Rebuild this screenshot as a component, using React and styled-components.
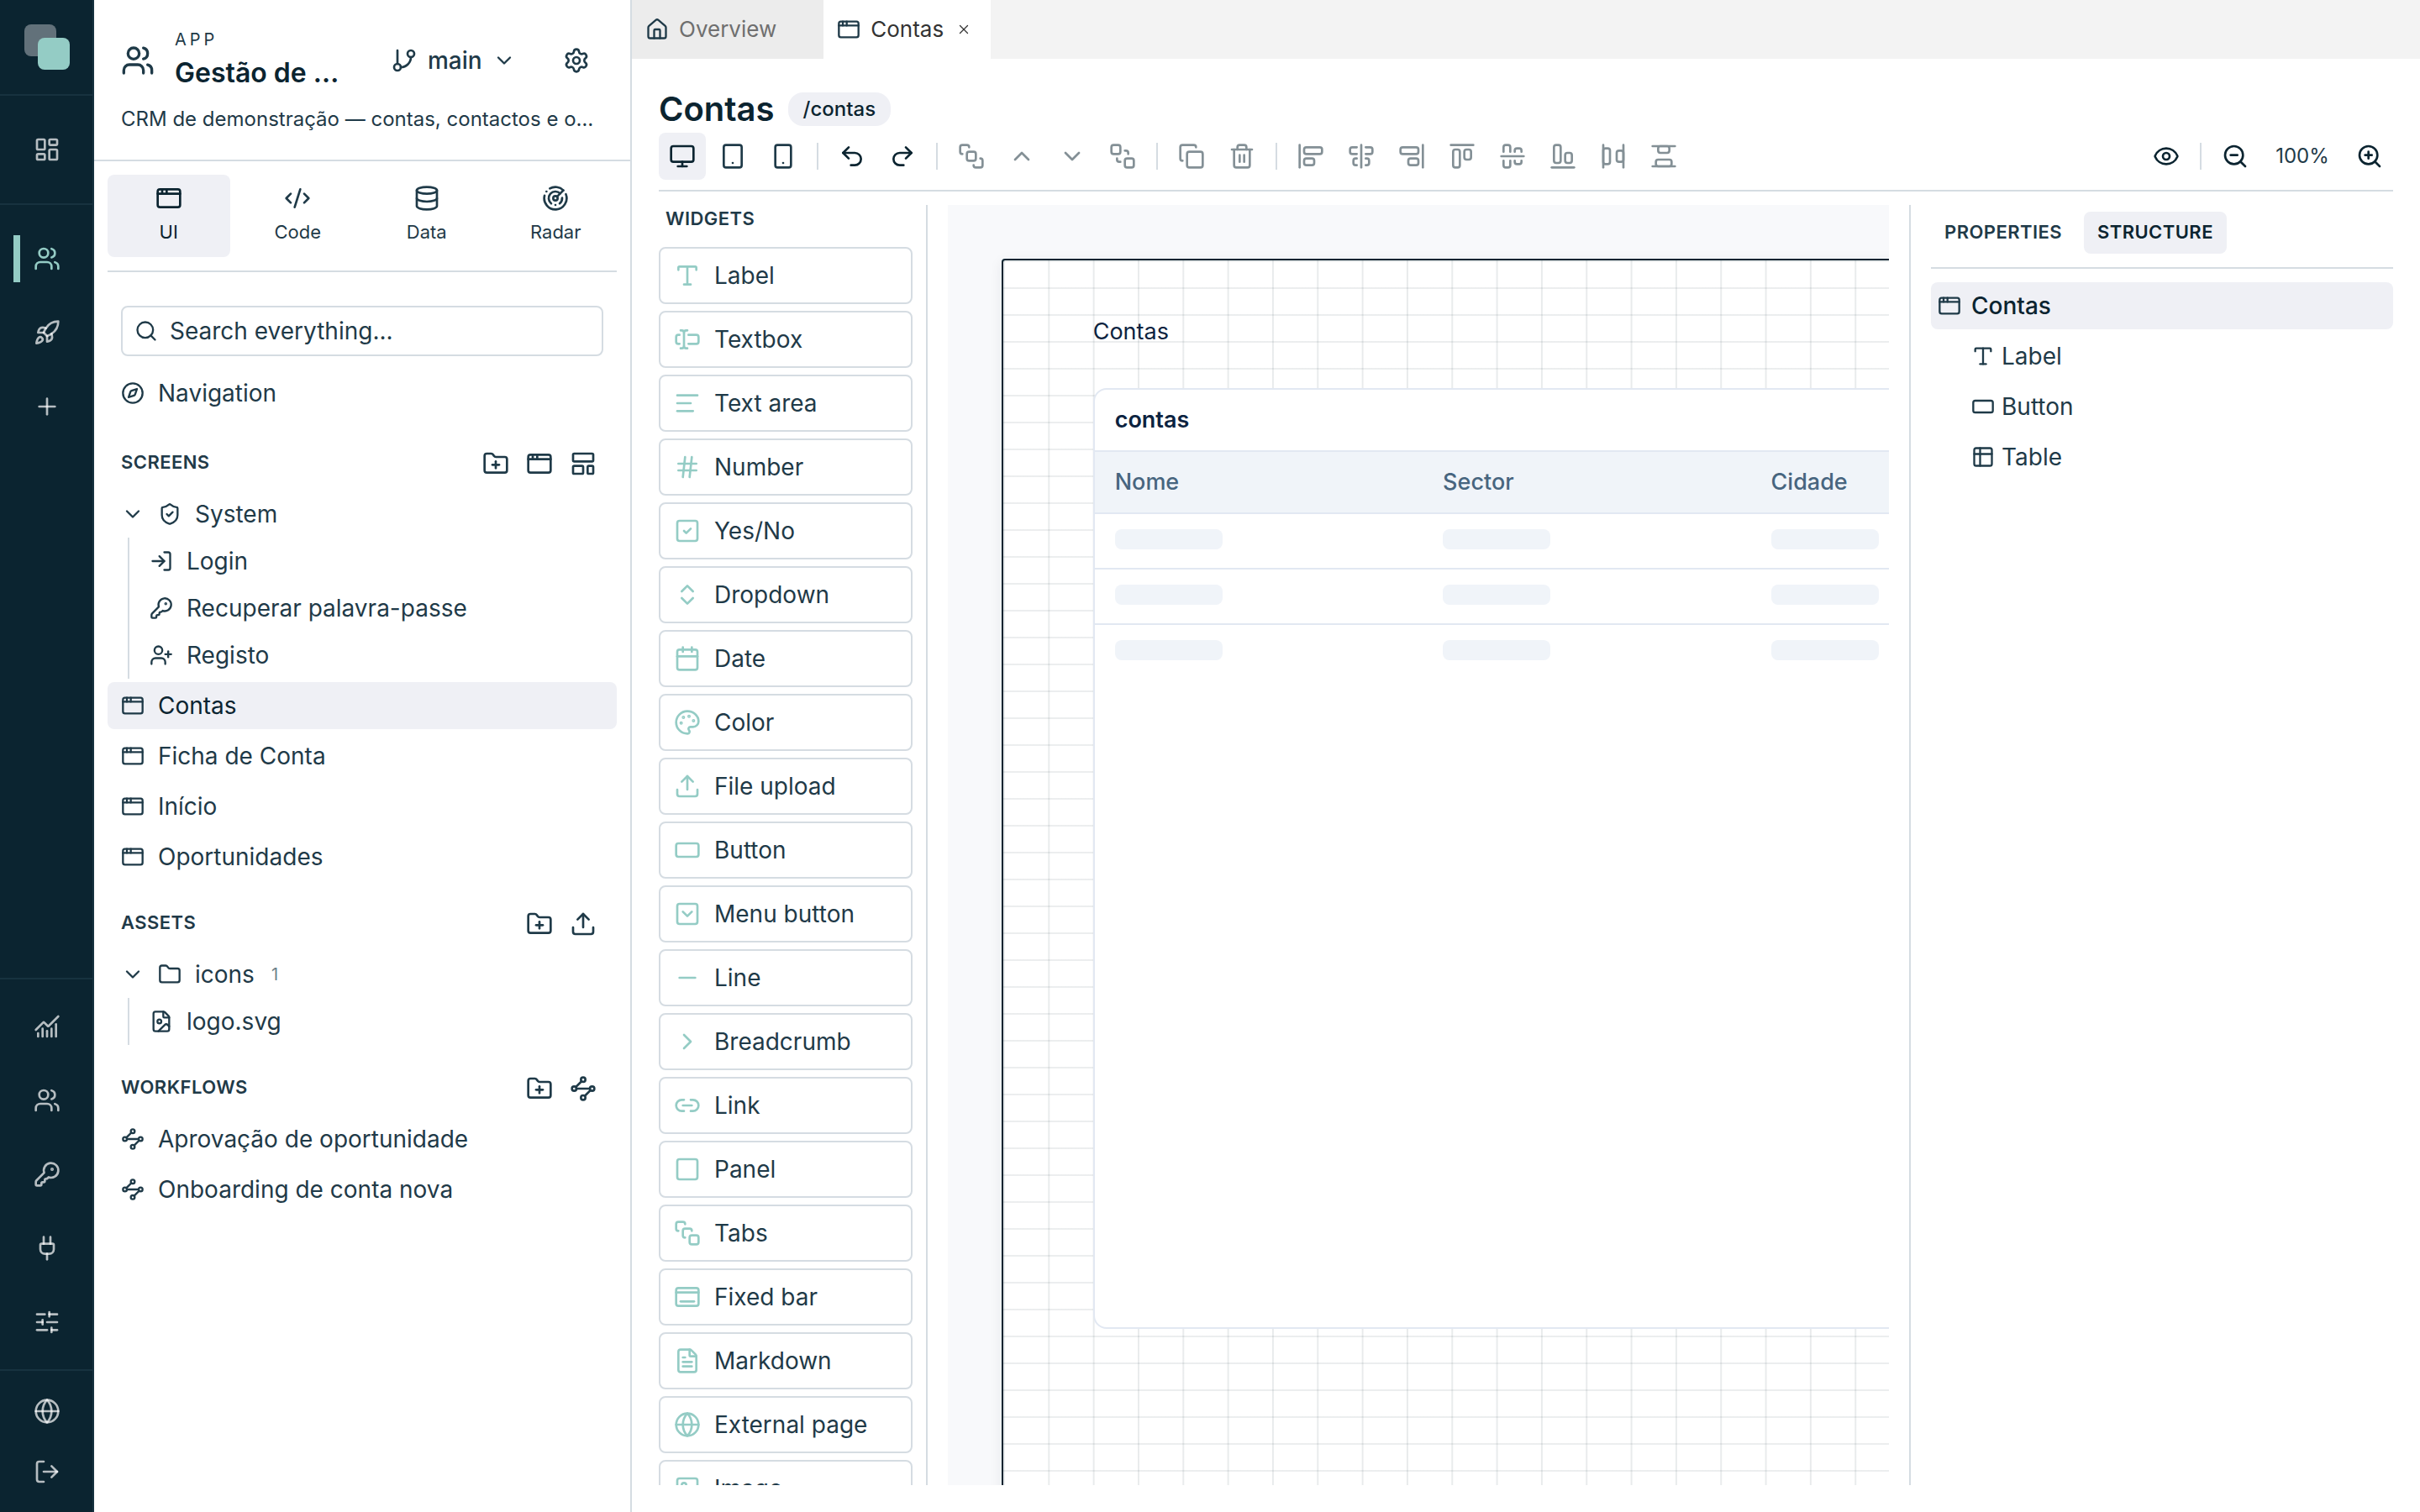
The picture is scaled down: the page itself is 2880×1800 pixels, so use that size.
import React, { useState } from 'react';
import styled, { createGlobalStyle, css } from 'styled-components';
import {
    AlignCenterHorizontal, AlignCenterVertical, AlignEndHorizontal, AlignEndVertical,
    AlignHorizontalSpaceBetween, AlignStartHorizontal, AlignStartVertical,
    AlignVerticalSpaceBetween, AppWindow, BringToFront, Calendar, ChartNoAxesCombined,
    ChevronDown, ChevronRight, ChevronUp, ChevronsUpDown, CodeXml, Compass, Copy, Database,
    Dock, Eye, FileImage, FileText, Folder, FolderPlus, GitBranch, Globe, Hash, House, Image,
    KeyRound, LayoutDashboard, LayoutTemplate, Link2, LogIn, LogOut, Minus, Monitor, Palette,
    Plug, Plus, Radar, RectangleHorizontal, Redo2, Rocket, Search, SendToBack, Settings,
    ShieldCheck, SlidersHorizontal, Smartphone, Square, SquareCheck, SquareChevronDown,
    SquareStack, Tablet, TextAlignStart, TextCursorInput, Trash2, Type, Undo2, Upload,
    UserPlus, Users, X, ZoomIn, ZoomOut,
} from 'lucide-react';

// ============================================
// THEME
// ============================================

const colors = {
    ink: '#0b2430',
    text: '#1f3a48',
    muted: '#6d7f89',
    line: '#d5dce2',
    soft: '#eff0f5',
    mint: '#94ccc5',
    railLine: '#17323f',
    railIcon: 'rgba(255, 255, 255, 0.7)',
    canvas: '#f8f9fb',
    sheetText: '#0c2340',
    sheetLine: '#e2e8f2',
    sheetSoft: '#f0f4f9',
    sheetHead: '#47657f',
};

const GlobalStyle = createGlobalStyle`
  *, *::before, *::after {
    box-sizing: border-box;
  }

  body {
    margin: 0;
    font-family: Inter, 'Noto Sans', sans-serif;
    font-size: 28px;
    line-height: 40px;
    color: ${colors.text};
    background: #fff;
  }

  button, input {
    font: inherit;
    color: inherit;
  }

  button {
    margin: 0;
    padding: 0;
    border: 0;
    background: none;
    cursor: pointer;
  }

  a {
    color: inherit;
    text-decoration: none;
  }

  svg {
    display: block;
    flex: none;
  }
`;

// ============================================
// SHELL
// ============================================

const Shell = styled.div`
  display: flex;
  height: 100vh;
  overflow: hidden;
`;

const Rail = styled.nav`
  display: flex;
  flex-direction: column;
  flex: none;
  width: 112px;
  background: ${colors.ink};
  border-right: 2px solid ${colors.railLine};
`;

const RailLogo = styled.a`
  display: flex;
  align-items: center;
  justify-content: center;
  height: 114px;
  padding-left: 2px;
  border-bottom: 2px solid ${colors.railLine};
`;

const RailGroup = styled.div`
  display: flex;
  flex-direction: column;
  gap: ${(p) => p.$gap}px;
  padding: ${(p) => p.$pad}px 14px ${(p) => p.$pad}px 16px;
  ${(p) => p.$line === 'bottom' && css`border-bottom: 2px solid ${colors.railLine};`}
  ${(p) => p.$line === 'top' && css`border-top: 2px solid ${colors.railLine};`}
  ${(p) => p.$grow && css`flex: 1;`}
`;

const RailLink = styled.a`
  display: flex;
  align-items: center;
  justify-content: center;
  height: 56px;
  color: ${(p) => (p.$active ? colors.mint : colors.railIcon)};
  ${(p) => p.$active && css`
    padding-right: 8px;
    border-left: 8px solid ${colors.mint};
  `}
`;

// ============================================
// SIDEBAR
// ============================================

const Sidebar = styled.aside`
  flex: none;
  width: 640px;
  border-right: 2px solid ${colors.line};
`;

const AppHeader = styled.header`
  height: 192px;
  padding: 32px 32px 0;
  border-bottom: 2px solid ${colors.line};
`;

const AppHeaderRow = styled.div`
  display: flex;
  align-items: center;
  height: 80px;
`;

const AppName = styled.div`
  width: 226px;
  margin-left: 24px;
`;

const Eyebrow = styled.div`
  font-size: 20px;
  line-height: 30px;
  letter-spacing: 4px;
`;

const AppTitle = styled.h2`
  margin: 0;
  font-size: 32px;
  line-height: 50px;
  font-weight: 600;
  color: ${colors.ink};
`;

const BranchButton = styled.button`
  display: flex;
  align-items: center;
  gap: 12px;
  margin-left: 31px;
  font-weight: 500;
`;

const GearButton = styled.button`
  margin-left: auto;
  padding: 16px;
`;

const AppDescription = styled.p`
  margin: 12px 0 0;
  font-size: 24px;
  line-height: 36px;
  white-space: nowrap;
`;

const SidebarBody = styled.div`
  padding: 16px;
`;

const ModeTabs = styled.div`
  display: grid;
  grid-template-columns: repeat(4, 1fr);
  gap: 8px;
  padding-bottom: 16px;
  border-bottom: 2px solid ${colors.line};
`;

const ModeTab = styled.button`
  display: flex;
  flex-direction: column;
  align-items: center;
  gap: 8px;
  height: 98px;
  padding-top: 12px;
  border-radius: 8px;
  font-size: 22px;
  line-height: 32px;
  color: ${(p) => (p.$active ? colors.ink : colors.text)};
  background: ${(p) => (p.$active ? colors.soft : 'transparent')};
`;

const SearchBox = styled.label`
  display: flex;
  align-items: center;
  gap: 14px;
  height: 60px;
  margin: 40px 16px 16px;
  padding: 0 14px;
  border: 2px solid ${colors.line};
  border-radius: 8px;

  input {
    flex: 1;
    min-width: 0;
    padding: 0;
    border: 0;
    outline: 0;
    background: none;
  }

  input::placeholder {
    color: ${colors.text};
    opacity: 1;
  }
`;

const SectionHeader = styled.div`
  display: flex;
  align-items: center;
  height: 48px;
  margin: 28px 0 8px;
  padding: 0 16px;
`;

const SectionTitle = styled.h3`
  flex: 1;
  margin: 0;
  padding-bottom: 4px;
  font-size: 22px;
  line-height: 32px;
  font-weight: 600;
  letter-spacing: 0.02em;
`;

const SectionAction = styled.button`
  display: flex;
  align-items: center;
  justify-content: center;
  width: 48px;
  height: 48px;
  margin-left: 4px;
`;

const TreeList = styled.div`
  display: flex;
  flex-direction: column;
  gap: 4px;
`;

const NavigationList = styled(TreeList)`
  padding-bottom: 4px;
`;

const TreeBranch = styled.div`
  margin-left: 24px;
  border-left: 2px solid ${colors.line};
`;

const TreeRow = styled.a`
  display: flex;
  align-items: center;
  gap: 16px;
  height: 56px;
  padding: 0 ${(p) => (p.$child ? 24 : 16)}px;
  border-radius: 8px;
  color: ${(p) => (p.$active ? colors.ink : colors.text)};
  background: ${(p) => (p.$active ? colors.soft : 'transparent')};

  svg {
    color: ${colors.text};
  }
`;

const Count = styled.span`
  margin-left: 4px;
  font-size: 20px;
  color: ${colors.muted};
`;

// ============================================
// MAIN AREA
// ============================================

const Main = styled.main`
  display: flex;
  flex-direction: column;
  flex: 1;
  min-width: 0;
`;

const TabStrip = styled.div`
  display: flex;
  height: 70px;
  background: #f3f3f3;
`;

const DocTab = styled.div`
  display: flex;
  align-items: center;
  gap: 8px;
  padding: 0 16px;
  font-size: 26px;
  color: ${(p) => (p.$active ? '#333' : '#6f6f6f')};
  background: ${(p) => (p.$active ? '#fff' : '#ececec')};
`;

const DocTabLabel = styled.button`
  display: flex;
  align-items: center;
  gap: 12px;

  svg {
    color: ${colors.text};
  }
`;

const DocTabClose = styled.button`
  display: flex;
  align-items: center;
  justify-content: center;
  width: 32px;
  height: 32px;
  visibility: ${(p) => (p.$active ? 'visible' : 'hidden')};
`;

const Editor = styled.div`
  display: flex;
  flex-direction: column;
  flex: 1;
  min-height: 0;
  padding: 32px;
`;

const TitleRow = styled.div`
  display: flex;
  align-items: center;
  gap: 16px;
  height: 56px;
`;

const PageTitle = styled.h1`
  margin: 0;
  font-size: 40px;
  line-height: 56px;
  font-weight: 600;
  color: ${colors.ink};
`;

const RoutePill = styled.span`
  padding: 0 18px;
  border-radius: 18px;
  font-size: 24px;
  font-weight: 500;
  color: ${colors.ink};
  background: ${colors.soft};
`;

const Toolbar = styled.div`
  display: flex;
  align-items: center;
  gap: 4px;
  padding-bottom: 12px;
  border-bottom: 2px solid ${colors.line};
`;

const ToolButton = styled.button`
  display: flex;
  align-items: center;
  justify-content: center;
  width: 56px;
  height: 56px;
  border-radius: 8px;
  color: ${(p) => (p.$quiet ? colors.text : colors.ink)};
  background: ${(p) => (p.$active ? colors.soft : 'transparent')};

  &:disabled {
    opacity: 0.5;
    cursor: default;
  }
`;

const ToolDivider = styled.span`
  width: 2px;
  height: 32px;
  margin: 0 8px;
  background: ${colors.line};
`;

const Spacer = styled.span`
  flex: 1;
`;

const ZoomLevel = styled.span`
  width: 96px;
  font-size: 24px;
  text-align: center;
`;

const Workspace = styled.div`
  display: flex;
  gap: 24px;
  flex: 1;
  min-height: 0;
  padding-top: 16px;
`;

// ============================================
// WIDGET PALETTE
// ============================================

const WidgetPanel = styled.section`
  flex: none;
  width: 320px;
  padding-right: 16px;
  border-right: 2px solid ${colors.line};
  overflow: hidden;
`;

const WidgetHeading = styled.h3`
  margin: 0 8px 18px;
  font-size: 22px;
  line-height: 32px;
  font-weight: 600;
  letter-spacing: 0.02em;
`;

const WidgetButton = styled.button`
  display: flex;
  align-items: center;
  gap: 16px;
  width: 100%;
  height: 68px;
  margin-bottom: 8px;
  padding: 0 16px;
  border: 2px solid ${colors.line};
  border-radius: 8px;
  text-align: left;

  svg {
    color: ${colors.mint};
  }
`;

// ============================================
// CANVAS
// ============================================

const CanvasScroll = styled.section`
  flex: 1;
  min-width: 0;
  padding: 64px 0 0 64px;
  background: ${colors.canvas};
  overflow: hidden;
`;

const Sheet = styled.div`
  display: grid;
  grid-template-columns: repeat(24, 1fr);
  grid-template-rows: 88px 1120px;
  width: 1284px;
  min-height: 1600px;
  padding-top: 64px;
  border: 2px solid ${colors.ink};
  border-radius: 4px;
  box-shadow: 0 4px 16px rgba(11, 36, 48, 0.08);
  background-color: #fff;
  background-image:
    linear-gradient(to right, rgba(11, 36, 48, 0.09) 2px, transparent 2px),
    linear-gradient(to bottom, rgba(11, 36, 48, 0.08) 2px, transparent 2px);
  background-size: calc(100% / 24) 32px;
  font-size: 27px;
  color: ${colors.sheetText};
`;

const SheetLabel = styled.div`
  grid-column: 3 / -1;
  line-height: 42px;
`;

const SheetCard = styled.div`
  grid-column: 3 / -1;
  margin-right: -2px;
  border: 2px solid ${colors.sheetLine};
  border-radius: 16px;
  background: #fff;
  overflow: hidden;
`;

const CardTitle = styled.div`
  padding: 16px 24px;
  font-weight: 600;
`;

const DataTable = styled.table`
  width: 100%;
  table-layout: fixed;
  border-collapse: separate;
  border-spacing: 0;

  th {
    padding: 16px 24px;
    border-top: 2px solid ${colors.sheetLine};
    border-bottom: 2px solid ${colors.sheetLine};
    font-weight: 500;
    text-align: left;
    color: ${colors.sheetHead};
    background: ${colors.sheetSoft};
  }

  td {
    padding: 18px 24px 22px;
    border-bottom: 2px solid ${colors.sheetLine};
  }

  tbody tr:last-child td {
    border-bottom: 0;
  }
`;

const Skeleton = styled.div`
  width: 128px;
  height: 24px;
  border-radius: 8px;
  background: ${colors.sheetSoft};
`;

// ============================================
// INSPECTOR
// ============================================

const Inspector = styled.aside`
  flex: none;
  width: 576px;
  padding-left: 24px;
  border-left: 2px solid ${colors.line};
`;

const InspectorTabs = styled.div`
  display: flex;
  gap: 10px;
  padding: 8px 0 16px;
  border-bottom: 2px solid ${colors.line};
`;

const InspectorTab = styled.button`
  height: 50px;
  padding: 0 16px 2px;
  border-radius: 8px;
  font-size: 22px;
  font-weight: 600;
  letter-spacing: 0.02em;
  color: ${(p) => (p.$active ? colors.ink : colors.text)};
  background: ${(p) => (p.$active ? colors.soft : 'transparent')};
`;

const NodeList = styled.div`
  display: flex;
  flex-direction: column;
  gap: 4px;
  padding-top: 16px;
`;

const NodeRow = styled.button`
  display: flex;
  align-items: center;
  gap: ${(p) => (p.$root ? 12 : 8)}px;
  height: 56px;
  padding-left: ${(p) => (p.$root ? 8 : 48)}px;
  border-radius: 8px;
  font-weight: ${(p) => (p.$root ? 500 : 400)};
  color: ${(p) => (p.$root ? colors.ink : colors.text)};
  background: ${(p) => (p.$root ? colors.soft : 'transparent')};

  svg {
    color: ${colors.text};
  }
`;

// ============================================
// ICONS
// ============================================

function LineIcon({ size, children }) {
    return (
        <svg
            width={size}
            height={size}
            viewBox="0 0 24 24"
            fill="none"
            stroke="currentColor"
            strokeWidth="2"
            strokeLinecap="round"
            strokeLinejoin="round"
        >
            {children}
        </svg>
    );
}

function TableIcon({ size }) {
    return (
        <LineIcon size={size}>
            <rect x="3" y="3" width="18" height="18" rx="2" />
            <path d="M3 9h18" />
            <path d="M9 3v18" />
        </LineIcon>
    );
}

function WorkflowIcon({ size }) {
    return (
        <LineIcon size={size}>
            <path d="m10.586 5.414-5.172 5.172" />
            <path d="m18.586 13.414-5.172 5.172" />
            <path d="M6 12h12" />
            <circle cx="12" cy="20" r="2" />
            <circle cx="12" cy="4" r="2" />
            <circle cx="20" cy="12" r="2" />
            <circle cx="4" cy="12" r="2" />
        </LineIcon>
    );
}

// ============================================
// DATA
// ============================================

const modes = [
    { label: 'UI', icon: AppWindow },
    { label: 'Code', icon: CodeXml },
    { label: 'Data', icon: Database },
    { label: 'Radar', icon: Radar },
];

const systemScreens = [
    { label: 'Login', icon: LogIn },
    { label: 'Recuperar palavra-passe', icon: KeyRound },
    { label: 'Registo', icon: UserPlus },
];

const screens = ['Contas', 'Ficha de Conta', 'Início', 'Oportunidades'];

const workflows = ['Aprovação de oportunidade', 'Onboarding de conta nova'];

const devices = [
    { label: 'Desktop', icon: Monitor },
    { label: 'Tablet', icon: Tablet },
    { label: 'Phone', icon: Smartphone },
];

const orderTools = [
    { label: 'Bring to front', icon: BringToFront },
    { label: 'Move up', icon: ChevronUp },
    { label: 'Move down', icon: ChevronDown },
    { label: 'Send to back', icon: SendToBack },
];

const editTools = [
    { label: 'Duplicate', icon: Copy },
    { label: 'Delete', icon: Trash2 },
];

const alignTools = [
    { label: 'Align left', icon: AlignStartVertical },
    { label: 'Align center', icon: AlignCenterVertical },
    { label: 'Align right', icon: AlignEndVertical },
    { label: 'Align top', icon: AlignStartHorizontal },
    { label: 'Align middle', icon: AlignCenterHorizontal },
    { label: 'Align bottom', icon: AlignEndHorizontal },
    { label: 'Distribute horizontally', icon: AlignHorizontalSpaceBetween },
    { label: 'Distribute vertically', icon: AlignVerticalSpaceBetween },
];

const widgets = [
    { label: 'Label', icon: Type },
    { label: 'Textbox', icon: TextCursorInput },
    { label: 'Text area', icon: TextAlignStart },
    { label: 'Number', icon: Hash },
    { label: 'Yes/No', icon: SquareCheck },
    { label: 'Dropdown', icon: ChevronsUpDown },
    { label: 'Date', icon: Calendar },
    { label: 'Color', icon: Palette },
    { label: 'File upload', icon: Upload },
    { label: 'Button', icon: RectangleHorizontal },
    { label: 'Menu button', icon: SquareChevronDown },
    { label: 'Line', icon: Minus },
    { label: 'Breadcrumb', icon: ChevronRight },
    { label: 'Link', icon: Link2 },
    { label: 'Panel', icon: Square },
    { label: 'Tabs', icon: SquareStack },
    { label: 'Fixed bar', icon: Dock },
    { label: 'Markdown', icon: FileText },
    { label: 'External page', icon: Globe },
    { label: 'Image', icon: Image },
];

const nodes = [
    { label: 'Label', icon: Type },
    { label: 'Button', icon: RectangleHorizontal },
    { label: 'Table', icon: TableIcon },
];

const columns = ['Nome', 'Sector', 'Cidade'];

// ============================================
// COMPONENTS
// ============================================

function NavRail() {
    const link = (label, Icon, active) => (
        <RailLink key={label} href="#" aria-label={label} $active={active}>
            <Icon size={32} />
        </RailLink>
    );

    return (
        <Rail>
            <RailLogo href="#" aria-label="Home">
                <svg width="54" height="54" viewBox="0 0 54 54">
                    <rect width="38" height="38" rx="8" fill="#62717a" />
                    <rect x="16" y="16" width="38" height="38" rx="8" fill={colors.mint} />
                </svg>
            </RailLogo>
            <RailGroup $pad={36} $line="bottom">
                {link('Dashboard', LayoutDashboard)}
            </RailGroup>
            <RailGroup $pad={36} $gap={32} $grow>
                {link('CRM', Users, true)}
                {link('Launch', Rocket)}
                {link('New app', Plus)}
            </RailGroup>
            <RailGroup $pad={28} $gap={32} $line="top">
                {link('Analytics', ChartNoAxesCombined)}
                {link('Users', Users)}
                {link('Keys', KeyRound)}
                {link('Integrations', Plug)}
                {link('Preferences', SlidersHorizontal)}
            </RailGroup>
            <RailGroup $pad={20} $gap={16} $line="top">
                {link('Language', Globe)}
                {link('Sign out', LogOut)}
            </RailGroup>
        </Rail>
    );
}

function Section({ title, actions, children }) {
    return (
        <section>
            <SectionHeader>
                <SectionTitle>{title}</SectionTitle>
                {actions.map(({ label, icon: Icon }) => (
                    <SectionAction key={label} aria-label={label}>
                        <Icon size={32} />
                    </SectionAction>
                ))}
            </SectionHeader>
            <TreeList>{children}</TreeList>
        </section>
    );
}

function TreeItem({ label, icon: Icon, active, child }) {
    return (
        <TreeRow href="#" $active={active} $child={child}>
            <Icon size={28} />
            {label}
        </TreeRow>
    );
}

function AppSidebar() {
    const [mode, setMode] = useState('UI');
    const [query, setQuery] = useState('');

    return (
        <Sidebar>
            <AppHeader>
                <AppHeaderRow>
                    <Users size={40} />
                    <AppName>
                        <Eyebrow>APP</Eyebrow>
                        <AppTitle>Gestão de …</AppTitle>
                    </AppName>
                    <BranchButton>
                        <GitBranch size={32} />
                        main
                        <ChevronDown size={28} />
                    </BranchButton>
                    <GearButton aria-label="Settings">
                        <Settings size={32} />
                    </GearButton>
                </AppHeaderRow>
                <AppDescription>CRM de demonstração — contas, contactos e o…</AppDescription>
            </AppHeader>

            <SidebarBody>
                <ModeTabs>
                    {modes.map(({ label, icon: Icon }) => (
                        <ModeTab key={label} $active={mode === label} onClick={() => setMode(label)}>
                            <Icon size={32} />
                            {label}
                        </ModeTab>
                    ))}
                </ModeTabs>

                <SearchBox>
                    <Search size={28} />
                    <input
                        type="text"
                        aria-label="Search everything"
                        placeholder="Search everything..."
                        value={query}
                        onChange={(e) => setQuery(e.target.value)}
                    />
                </SearchBox>

                <NavigationList>
                    <TreeItem label="Navigation" icon={Compass} />
                </NavigationList>

                <Section
                    title="SCREENS"
                    actions={[
                        { label: 'New screen folder', icon: FolderPlus },
                        { label: 'New screen', icon: AppWindow },
                        { label: 'New from template', icon: LayoutTemplate },
                    ]}
                >
                    <div>
                        <TreeRow href="#">
                            <ChevronDown size={28} />
                            <ShieldCheck size={28} />
                            System
                        </TreeRow>
                        <TreeBranch>
                            {systemScreens.map((screen) => (
                                <TreeItem key={screen.label} {...screen} child />
                            ))}
                        </TreeBranch>
                    </div>
                    {screens.map((label) => (
                        <TreeItem key={label} label={label} icon={AppWindow} active={label === 'Contas'} />
                    ))}
                </Section>

                <Section
                    title="ASSETS"
                    actions={[
                        { label: 'New asset folder', icon: FolderPlus },
                        { label: 'Upload asset', icon: Upload },
                    ]}
                >
                    <div>
                        <TreeRow href="#">
                            <ChevronDown size={28} />
                            <Folder size={28} />
                            icons
                            <Count>1</Count>
                        </TreeRow>
                        <TreeBranch>
                            <TreeItem label="logo.svg" icon={FileImage} child />
                        </TreeBranch>
                    </div>
                </Section>

                <Section
                    title="WORKFLOWS"
                    actions={[
                        { label: 'New workflow folder', icon: FolderPlus },
                        { label: 'New workflow', icon: WorkflowIcon },
                    ]}
                >
                    {workflows.map((label) => (
                        <TreeItem key={label} label={label} icon={WorkflowIcon} />
                    ))}
                </Section>
            </SidebarBody>
        </Sidebar>
    );
}

function ToolGroup({ tools, active, disabled, onPick }) {
    return tools.map(({ label, icon: Icon }) => (
        <ToolButton
            key={label}
            aria-label={label}
            disabled={disabled}
            $active={active === label}
            $quiet={Boolean(active) && active !== label}
            onClick={() => onPick && onPick(label)}
        >
            <Icon size={32} />
        </ToolButton>
    ));
}

function EditorToolbar() {
    const [device, setDevice] = useState('Desktop');

    return (
        <Toolbar>
            <ToolGroup tools={devices} active={device} onPick={setDevice} />
            <ToolDivider />
            <ToolGroup tools={[{ label: 'Undo', icon: Undo2 }, { label: 'Redo', icon: Redo2 }]} />
            <ToolDivider />
            <ToolGroup tools={orderTools} disabled />
            <ToolDivider />
            <ToolGroup tools={editTools} disabled />
            <ToolDivider />
            <ToolGroup tools={alignTools} disabled />
            <Spacer />
            <ToolGroup tools={[{ label: 'Preview', icon: Eye }]} />
            <ToolDivider />
            <ToolGroup tools={[{ label: 'Zoom out', icon: ZoomOut }]} />
            <ZoomLevel>100%</ZoomLevel>
            <ToolGroup tools={[{ label: 'Zoom in', icon: ZoomIn }]} />
        </Toolbar>
    );
}

function Canvas() {
    return (
        <CanvasScroll>
            <Sheet>
                <SheetLabel>Contas</SheetLabel>
                <SheetCard>
                    <CardTitle>contas</CardTitle>
                    <DataTable>
                        <thead>
                            <tr>
                                {columns.map((column) => <th key={column}>{column}</th>)}
                            </tr>
                        </thead>
                        <tbody>
                            {[1, 2, 3].map((row) => (
                                <tr key={row}>
                                    {columns.map((column) => (
                                        <td key={column}><Skeleton /></td>
                                    ))}
                                </tr>
                            ))}
                        </tbody>
                    </DataTable>
                </SheetCard>
            </Sheet>
        </CanvasScroll>
    );
}

function App() {
    const [panel, setPanel] = useState('STRUCTURE');

    return (
        <Shell>
            <GlobalStyle />
            <NavRail />
            <AppSidebar />
            <Main>
                <TabStrip>
                    <DocTab>
                        <DocTabLabel><House size={28} />Overview</DocTabLabel>
                        <DocTabClose aria-label="Close Overview"><X size={18} strokeWidth={1.75} /></DocTabClose>
                    </DocTab>
                    <DocTab $active>
                        <DocTabLabel><AppWindow size={28} />Contas</DocTabLabel>
                        <DocTabClose $active aria-label="Close Contas"><X size={18} strokeWidth={1.75} /></DocTabClose>
                    </DocTab>
                </TabStrip>

                <Editor>
                    <TitleRow>
                        <PageTitle>Contas</PageTitle>
                        <RoutePill>/contas</RoutePill>
                    </TitleRow>
                    <EditorToolbar />

                    <Workspace>
                        <WidgetPanel>
                            <WidgetHeading>WIDGETS</WidgetHeading>
                            {widgets.map(({ label, icon: Icon }) => (
                                <WidgetButton key={label}>
                                    <Icon size={32} />
                                    {label}
                                </WidgetButton>
                            ))}
                        </WidgetPanel>

                        <Canvas />

                        <Inspector>
                            <InspectorTabs>
                                {['PROPERTIES', 'STRUCTURE'].map((label) => (
                                    <InspectorTab key={label} $active={panel === label} onClick={() => setPanel(label)}>
                                        {label}
                                    </InspectorTab>
                                ))}
                            </InspectorTabs>
                            <NodeList>
                                <NodeRow $root>
                                    <AppWindow size={28} />
                                    Contas
                                </NodeRow>
                                {nodes.map(({ label, icon: Icon }) => (
                                    <NodeRow key={label}>
                                        <Icon size={28} />
                                        {label}
                                    </NodeRow>
                                ))}
                            </NodeList>
                        </Inspector>
                    </Workspace>
                </Editor>
            </Main>
        </Shell>
    );
}

export default App;
